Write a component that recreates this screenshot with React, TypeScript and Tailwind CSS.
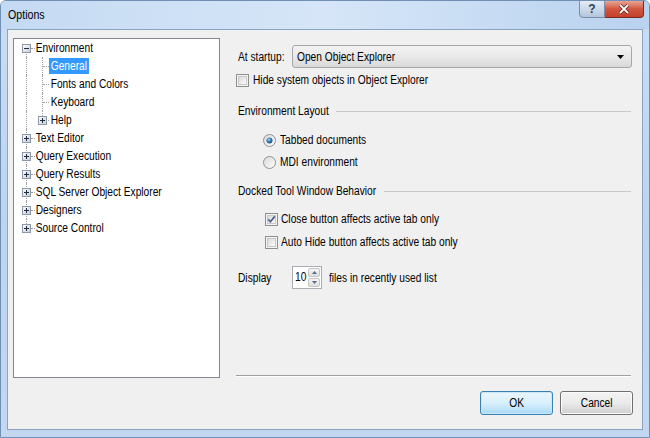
import React from 'react';

type Row = {
  label: string;
  level: 0 | 1;
  box?: 'plus' | 'minus';
  selected?: boolean;
};

const rows: Row[] = [
  { label: 'Environment', level: 0, box: 'minus' },
  { label: 'General', level: 1, selected: true },
  { label: 'Fonts and Colors', level: 1 },
  { label: 'Keyboard', level: 1 },
  { label: 'Help', level: 1, box: 'plus' },
  { label: 'Text Editor', level: 0, box: 'plus' },
  { label: 'Query Execution', level: 0, box: 'plus' },
  { label: 'Query Results', level: 0, box: 'plus' },
  { label: 'SQL Server Object Explorer', level: 0, box: 'plus' },
  { label: 'Designers', level: 0, box: 'plus' },
  { label: 'Source Control', level: 0, box: 'plus' },
];

const font = {
  fontFamily: "'Liberation Sans', Arial, sans-serif",
};

// Segoe UI in the screenshot is narrower than Arial, so squeeze the text a bit
function T({ children, className = '' }: { children: React.ReactNode; className?: string }) {
  return (
    <span className={`inline-block origin-left scale-x-[0.85] whitespace-nowrap ${className}`}>
      {children}
    </span>
  );
}

function ExpandBox({ kind }: { kind: 'plus' | 'minus' }) {
  return (
    <svg width="9" height="9" viewBox="0 0 9 9" className="block">
      <defs>
        <linearGradient id="eb" x1="0" y1="0" x2="1" y2="1">
          <stop offset="0" stopColor="#ffffff" />
          <stop offset="1" stopColor="#c6ccd6" />
        </linearGradient>
      </defs>
      <rect x="0.5" y="0.5" width="8" height="8" fill="url(#eb)" stroke="#8c97a8" />
      <line x1="2" y1="4.5" x2="7" y2="4.5" stroke="#1f2a40" />
      {kind === 'plus' && <line x1="4.5" y1="2" x2="4.5" y2="7" stroke="#1f2a40" />}
    </svg>
  );
}

function TreeRow({ row, index }: { row: Row; index: number }) {
  const last = index === rows.length - 1;
  const first = index === 0;
  const isChild = row.level === 1;
  const lastChild = row.label === 'Help';
  return (
    <div className="relative h-[18px] flex items-center">
      {/* root vertical line */}
      <span
        className={`absolute left-[12px] border-l border-dotted border-[#a0a0a0] ${
          first ? 'top-[9px] h-[9px]' : last ? 'top-0 h-[9px]' : 'top-0 h-[18px]'
        }`}
      />
      {isChild && (
        <span
          className={`absolute left-[28px] top-0 border-l border-dotted border-[#a0a0a0] ${
            lastChild ? 'h-[9px]' : 'h-[18px]'
          }`}
        />
      )}
      {!isChild && (
        <span className="absolute left-[17px] top-[9px] w-[4px] border-t border-dotted border-[#a0a0a0]" />
      )}
      {isChild && (
        <span className="absolute left-[29px] top-[9px] w-[6px] border-t border-dotted border-[#a0a0a0]" />
      )}
      {row.box && (
        <span className={`absolute top-[5px] ${isChild ? 'left-[24px]' : 'left-[8px]'}`}>
          <ExpandBox kind={row.box} />
        </span>
      )}
      <span
        className={`absolute top-[1px] h-[16px] leading-[16px] px-[2px] text-[12px] whitespace-nowrap origin-left scale-x-[0.85] ${
          isChild ? 'left-[35px]' : 'left-[20px]'
        } ${row.selected ? 'bg-[#3399ff] text-white' : 'text-black'}`}
      >
        {row.label}
      </span>
    </div>
  );
}

function CheckBox({ checked }: { checked?: boolean }) {
  const id = checked ? 'cbg1' : 'cbg0';
  return (
    <svg width="13" height="13" viewBox="0 0 13 13" className="block shrink-0">
      <defs>
        <linearGradient id={id} x1="0" y1="0" x2="1" y2="1">
          <stop offset="0" stopColor="#d6d6d6" />
          <stop offset="1" stopColor="#ffffff" />
        </linearGradient>
      </defs>
      <rect x="0.5" y="0.5" width="12" height="12" fill="#f4f4f4" stroke="#8e8f8f" />
      <rect x="2.5" y="2.5" width="8" height="8" fill={`url(#${id})`} stroke="#c8c8c8" />
      {checked && (
        <path d="M3.2 6.3 L5.4 8.8 L9.8 3.4" fill="none" stroke="#4a5f8c" strokeWidth="1.7" />
      )}
    </svg>
  );
}

function Radio({ checked }: { checked?: boolean }) {
  return (
    <svg width="13" height="13" viewBox="0 0 13 13" className="block shrink-0">
      <defs>
        <radialGradient id="rdot" cx="0.4" cy="0.35" r="0.7">
          <stop offset="0" stopColor="#9fd3f7" />
          <stop offset="0.6" stopColor="#2a6fb0" />
          <stop offset="1" stopColor="#1c4f86" />
        </radialGradient>
        <linearGradient id="rbg" x1="0" y1="0" x2="1" y2="1">
          <stop offset="0" stopColor="#d8d8d8" />
          <stop offset="1" stopColor="#ffffff" />
        </linearGradient>
      </defs>
      <circle cx="6.5" cy="6.5" r="6" fill="url(#rbg)" stroke="#8e8f8f" />
      {checked && <circle cx="6.5" cy="6.5" r="3" fill="url(#rdot)" />}
    </svg>
  );
}

function GroupHeader({ label, textW }: { label: string; textW: string }) {
  return (
    <div className="h-[16px] flex items-center pl-[2px]">
      <span className={`${textW} shrink-0`}>
        <T>{label}</T>
      </span>
      <span className="flex-1 mr-[1px] h-px bg-[#c9c9c9]" />
    </div>
  );
}

export default function App() {
  return (
    <div
      className="w-[650px] h-[438px] overflow-hidden bg-gradient-to-b from-[#c9def4] via-[#bcd4ee] to-[#c3d8f0] border border-[#6f8fb5] rounded-t-[6px] flex flex-col text-black"
      style={font}
    >
      {/* title bar */}
      <div className="relative h-[28px] shrink-0 flex items-center pl-[7px] bg-gradient-to-r from-[#c4daf2] via-[#d6e6f8] to-[#b9d2ee]">
        <T className="text-[12.5px] text-black">Options</T>
        <div className="absolute top-[-1px] right-[5px] flex">
          <div className="w-[26px] h-[18px] rounded-bl-[4px] border border-[#7c8ea6] bg-gradient-to-b from-[#e4ecf6] to-[#b4c6dc] flex items-center justify-center text-[12px] font-bold text-[#2f3d52]">
            ?
          </div>
          <div className="w-[39px] h-[18px] rounded-br-[4px] border border-l-0 border-[#7a2a20] bg-gradient-to-b from-[#e8a493] via-[#d2553f] to-[#c2412c] flex items-center justify-center">
            <svg width="12" height="10" viewBox="0 0 12 10">
              <path d="M2 1 L10 9 M10 1 L2 9" stroke="#5a1a12" strokeWidth="3.2" />
              <path d="M2 1 L10 9 M10 1 L2 9" stroke="#ffffff" strokeWidth="1.8" />
            </svg>
          </div>
        </div>
      </div>

      {/* client area */}
      <div className="flex-1 mx-[6px] mb-[7px] bg-[#f0f0f0] border border-[#8aa3c1] flex flex-col">
        <div className="flex pt-[8px] pl-[5px] pr-[10px]">
          {/* tree */}
          <div className="w-[207px] h-[340px] bg-white border border-[#828790] shrink-0 relative">
            {rows.map((r, i) => (
              <TreeRow key={r.label} row={r} index={i} />
            ))}
          </div>

          {/* right panel */}
          <div className="ml-[16px] flex-1 h-[340px] flex flex-col text-[12px]">
            <div className="mt-[7px] h-[23px] flex items-center">
              <span className="pl-[2px] w-[56px] shrink-0">
                <T>At startup:</T>
              </span>
              <div className="flex-1 h-[23px] rounded-[3px] border border-[#a7a7a7] bg-gradient-to-b from-[#f3f3f3] via-[#e9e9e9] to-[#d9d9d9] flex items-center pl-[4px] pr-[7px]">
                <span className="flex-1">
                  <T>Open Object Explorer</T>
                </span>
                <svg width="7" height="4" viewBox="0 0 7 4">
                  <path d="M0 0 H7 L3.5 4 Z" fill="#000" />
                </svg>
              </div>
            </div>

            <div className="mt-[4px] h-[16px] flex items-center">
              <CheckBox />
              <T className="ml-[4px]">Hide system objects in Object Explorer</T>
            </div>

            <div className="mt-[15px]">
              <GroupHeader label="Environment Layout" textW="w-[98px]" />
            </div>

            <div className="mt-[13px] h-[16px] flex items-center pl-[27px]">
              <Radio checked />
              <T className="ml-[4px]">Tabbed documents</T>
            </div>
            <div className="mt-[6px] h-[16px] flex items-center pl-[27px]">
              <Radio />
              <T className="ml-[4px]">MDI environment</T>
            </div>

            <div className="mt-[13px]">
              <GroupHeader label="Docked Tool Window Behavior" textW="w-[146px]" />
            </div>

            <div className="mt-[12px] h-[16px] flex items-center pl-[29px]">
              <CheckBox checked />
              <T className="ml-[3px]">Close button affects active tab only</T>
            </div>
            <div className="mt-[7px] h-[16px] flex items-center pl-[29px]">
              <CheckBox />
              <T className="ml-[3px]">Auto Hide button affects active tab only</T>
            </div>

            <div className="mt-[16px] h-[23px] flex items-center">
              <span className="pl-[2px] w-[56px] shrink-0">
                <T>Display</T>
              </span>
              <div className="w-[30px] h-[23px] bg-white border border-[#abadb3] flex">
                <span className="flex-1 pl-[2px] leading-[20px]">
                  <T>10</T>
                </span>
                <div className="w-[13px] flex flex-col gap-px py-[1px] pr-[1px]">
                  <div className="flex-1 rounded-[2px] border border-[#c5c5c5] bg-gradient-to-b from-[#f5f5f5] to-[#dedede] flex items-center justify-center">
                    <svg width="5" height="3" viewBox="0 0 5 3">
                      <path d="M0 3 H5 L2.5 0 Z" fill="#5a6a80" />
                    </svg>
                  </div>
                  <div className="flex-1 rounded-[2px] border border-[#c5c5c5] bg-gradient-to-b from-[#f5f5f5] to-[#dedede] flex items-center justify-center">
                    <svg width="5" height="3" viewBox="0 0 5 3">
                      <path d="M0 0 H5 L2.5 3 Z" fill="#5a6a80" />
                    </svg>
                  </div>
                </div>
              </div>
              <T className="ml-[7px]">files in recently used list</T>
            </div>

            <div className="mt-auto mb-[1px] h-px bg-[#a0a0a0] border-b border-white box-content mr-[1px]" />
          </div>
        </div>

        {/* buttons */}
        <div className="mt-[13px] flex justify-end gap-[7px] pr-[9px] text-[12px]">
          <button className="w-[73px] h-[24px] rounded-[3px] border border-[#3c7fb1] bg-gradient-to-b from-[#eaf6fd] via-[#d9f0fc] to-[#a7d9f5] shadow-[inset_0_0_0_1px_#c8e8fa]">
            <span className="inline-block scale-x-[0.85]">OK</span>
          </button>
          <button className="w-[73px] h-[24px] rounded-[3px] border border-[#707070] bg-gradient-to-b from-[#f2f2f2] via-[#ebebeb] to-[#cfcfcf] shadow-[inset_0_0_0_1px_#fcfcfc]">
            <span className="inline-block scale-x-[0.85]">Cancel</span>
          </button>
        </div>
      </div>
    </div>
  );
}
